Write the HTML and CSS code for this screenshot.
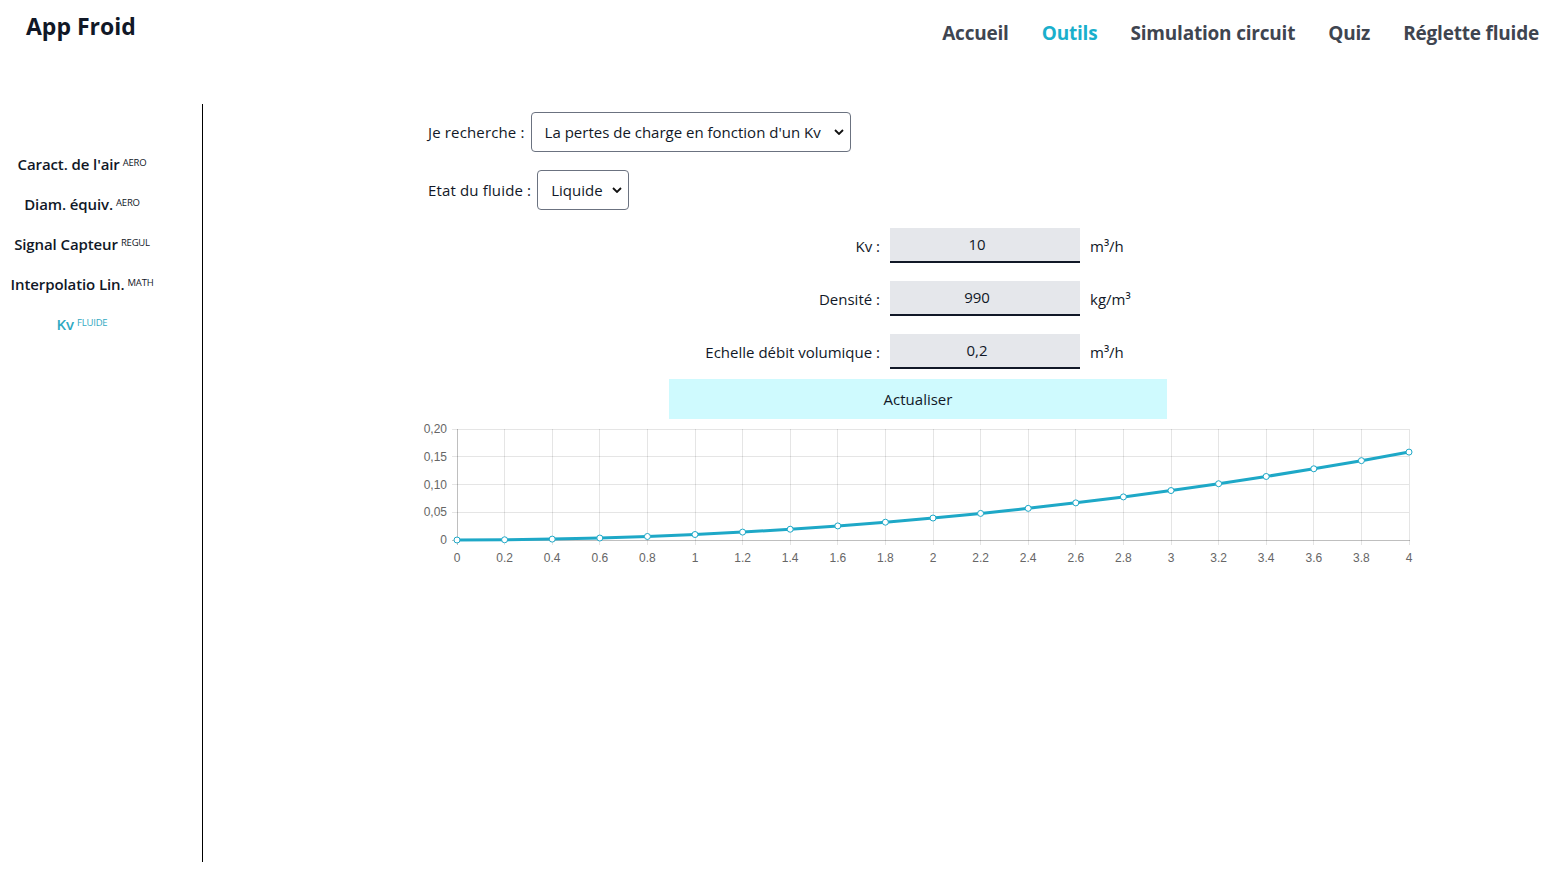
FILE: index.html
```html
<!DOCTYPE html>
<html lang="fr">
<head>
<meta charset="utf-8">
<title>App Froid</title>
<link rel="stylesheet" href="styles.css">
</head>
<body>
<header class="topbar">
  <div class="brand">App Froid</div>
  <nav class="mainnav">
    <a class="navlink" href="#">Accueil</a>
    <a class="navlink active" href="#">Outils</a>
    <a class="navlink" href="#">Simulation circuit</a>
    <a class="navlink" href="#">Quiz</a>
    <a class="navlink" href="#">Réglette fluide</a>
  </nav>
</header>
<div class="layout">
  <aside class="sidebar">
    <ul class="toollist">
      <li class="tool">Caract. de l'air<sup class="tag">AERO</sup></li>
      <li class="tool">Diam. équiv.<sup class="tag">AERO</sup></li>
      <li class="tool">Signal Capteur<sup class="tag">REGUL</sup></li>
      <li class="tool">Interpolatio Lin.<sup class="tag">MATH</sup></li>
      <li class="tool current">Kv<sup class="tag">FLUIDE</sup></li>
    </ul>
  </aside>
  <main class="content">
    <div class="selrow">
      <label class="sellabel">Je recherche :</label>
      <div class="selwrap sel-wide">
        <select class="sel"><option>La pertes de charge en fonction d'un Kv</option></select>
        <svg class="chev" viewBox="0 0 10 6" width="10" height="6"><path d="M1 1 L5 5 L9 1" fill="none" stroke="#111" stroke-width="1.8"/></svg>
      </div>
    </div>
    <div class="selrow">
      <label class="sellabel">Etat du fluide :</label>
      <div class="selwrap sel-narrow">
        <select class="sel"><option>Liquide</option></select>
        <svg class="chev" viewBox="0 0 10 6" width="10" height="6"><path d="M1 1 L5 5 L9 1" fill="none" stroke="#111" stroke-width="1.8"/></svg>
      </div>
    </div>
    <div class="fields">
      <label class="flabel">Kv :</label>
      <input class="finput" type="text" value="10">
      <span class="funit">m³/h</span>
      <label class="flabel">Densité :</label>
      <input class="finput" type="text" value="990">
      <span class="funit">kg/m³</span>
      <label class="flabel">Echelle débit volumique :</label>
      <input class="finput" type="text" value="0,2">
      <span class="funit">m³/h</span>
    </div>
    <div class="btnrow"><button class="refresh">Actualiser</button></div>
    <svg class="chart" viewBox="415 420 1005 150" width="1005" height="150">
      <g stroke="rgba(0,0,0,0.1)" stroke-width="1">
        <line x1="452" y1="429.5" x2="1409" y2="429.5"/>
        <line x1="452" y1="456.5" x2="1409" y2="456.5"/>
        <line x1="452" y1="484.5" x2="1409" y2="484.5"/>
        <line x1="452" y1="512.5" x2="1409" y2="512.5"/>
        <line x1="504.5" y1="429" x2="504.5" y2="545"/>
        <line x1="552.5" y1="429" x2="552.5" y2="545"/>
        <line x1="599.5" y1="429" x2="599.5" y2="545"/>
        <line x1="647.5" y1="429" x2="647.5" y2="545"/>
        <line x1="695.5" y1="429" x2="695.5" y2="545"/>
        <line x1="742.5" y1="429" x2="742.5" y2="545"/>
        <line x1="790.5" y1="429" x2="790.5" y2="545"/>
        <line x1="837.5" y1="429" x2="837.5" y2="545"/>
        <line x1="885.5" y1="429" x2="885.5" y2="545"/>
        <line x1="933.5" y1="429" x2="933.5" y2="545"/>
        <line x1="980.5" y1="429" x2="980.5" y2="545"/>
        <line x1="1028.5" y1="429" x2="1028.5" y2="545"/>
        <line x1="1075.5" y1="429" x2="1075.5" y2="545"/>
        <line x1="1123.5" y1="429" x2="1123.5" y2="545"/>
        <line x1="1171.5" y1="429" x2="1171.5" y2="545"/>
        <line x1="1218.5" y1="429" x2="1218.5" y2="545"/>
        <line x1="1266.5" y1="429" x2="1266.5" y2="545"/>
        <line x1="1313.5" y1="429" x2="1313.5" y2="545"/>
        <line x1="1361.5" y1="429" x2="1361.5" y2="545"/>
        <line x1="1409.5" y1="429" x2="1409.5" y2="545"/>
      </g>
      <g stroke="rgba(0,0,0,0.25)" stroke-width="1">
        <line x1="457.5" y1="429" x2="457.5" y2="545"/>
        <line x1="452" y1="540.5" x2="1410" y2="540.5"/>
      </g>
      <g class="ylab" text-anchor="end">
        <text x="447" y="433">0,20</text>
        <text x="447" y="460.5">0,15</text>
        <text x="447" y="488.5">0,10</text>
        <text x="447" y="516">0,05</text>
        <text x="447" y="544">0</text>
      </g>
      <g class="xlab" text-anchor="middle">
        <text x="457" y="561.5">0</text>
        <text x="504.6" y="561.5">0.2</text>
        <text x="552.2" y="561.5">0.4</text>
        <text x="599.8" y="561.5">0.6</text>
        <text x="647.4" y="561.5">0.8</text>
        <text x="695" y="561.5">1</text>
        <text x="742.6" y="561.5">1.2</text>
        <text x="790.2" y="561.5">1.4</text>
        <text x="837.8" y="561.5">1.6</text>
        <text x="885.4" y="561.5">1.8</text>
        <text x="933" y="561.5">2</text>
        <text x="980.6" y="561.5">2.2</text>
        <text x="1028.2" y="561.5">2.4</text>
        <text x="1075.8" y="561.5">2.6</text>
        <text x="1123.4" y="561.5">2.8</text>
        <text x="1171" y="561.5">3</text>
        <text x="1218.6" y="561.5">3.2</text>
        <text x="1266.2" y="561.5">3.4</text>
        <text x="1313.8" y="561.5">3.6</text>
        <text x="1361.4" y="561.5">3.8</text>
        <text x="1409" y="561.5">4</text>
      </g>
      <polyline class="curve" points="457,540 504.6,539.78 552.2,539.12 599.8,538.02 647.4,536.48 695,534.51 742.6,532.09 790.2,529.23 837.8,525.93 885.4,522.2 933,518.02 980.6,513.41 1028.2,508.35 1075.8,502.86 1123.4,496.92 1171,490.55 1218.6,483.74 1266.2,476.48 1313.8,468.79 1361.4,460.66 1409,452.09"/>
      <g class="dots">
        <circle cx="457" cy="540" r="3"/>
        <circle cx="504.6" cy="539.78" r="3"/>
        <circle cx="552.2" cy="539.12" r="3"/>
        <circle cx="599.8" cy="538.02" r="3"/>
        <circle cx="647.4" cy="536.48" r="3"/>
        <circle cx="695" cy="534.51" r="3"/>
        <circle cx="742.6" cy="532.09" r="3"/>
        <circle cx="790.2" cy="529.23" r="3"/>
        <circle cx="837.8" cy="525.93" r="3"/>
        <circle cx="885.4" cy="522.2" r="3"/>
        <circle cx="933" cy="518.02" r="3"/>
        <circle cx="980.6" cy="513.41" r="3"/>
        <circle cx="1028.2" cy="508.35" r="3"/>
        <circle cx="1075.8" cy="502.86" r="3"/>
        <circle cx="1123.4" cy="496.92" r="3"/>
        <circle cx="1171" cy="490.55" r="3"/>
        <circle cx="1218.6" cy="483.74" r="3"/>
        <circle cx="1266.2" cy="476.48" r="3"/>
        <circle cx="1313.8" cy="468.79" r="3"/>
        <circle cx="1361.4" cy="460.66" r="3"/>
        <circle cx="1409" cy="452.09" r="3"/>
      </g>
    </svg>
  </main>
</div>
</body>
</html>
```
FILE: styles.css
```css
* { box-sizing: border-box; }
html, body { margin: 0; padding: 0; background: #fff; }
body {
  font-family: "Open Sans", "Noto Sans", "Liberation Sans", sans-serif;
  color: #111827;
  font-size: 15px;
}
.topbar {
  height: 104px;
  display: flex;
  justify-content: space-between;
  align-items: flex-start;
  padding: 0 24px 0 26px;
}
.brand {
  font-size: 23px;
  font-weight: 700;
  line-height: 32px;
  margin-top: 10px;
  color: #111827;
}
.mainnav {
  display: flex;
  gap: 33px;
  margin-top: 19px;
}
.navlink {
  font-size: 19px;
  font-weight: 700;
  line-height: 28px;
  color: #3f4550;
  text-decoration: none;
  letter-spacing: -0.2px;
}
.navlink.active { color: #1aafcc; }
.layout { display: flex; }
.sidebar {
  width: 203px;
  height: 758px;
  padding-right: 38px;
  border-right: 1px solid #000;
}
.toollist {
  list-style: none;
  margin: 0;
  padding: 40px 0 0 0;
}
.tool {
  height: 40px;
  line-height: 40px;
  text-align: center;
  font-size: 15px;
  font-weight: 600;
  color: #111827;
  letter-spacing: -0.1px;
}
.tool.current { color: #2fa9c2; }
.tag {
  font-size: 9.5px;
  font-weight: 400;
  margin-left: 3px;
  vertical-align: 4px;
  line-height: 0;
  letter-spacing: -0.2px;
}
.content {
  margin-left: 207px;
  width: 1016px;
  padding-top: 8px;
}
.selrow {
  display: flex;
  align-items: center;
  gap: 6px;
  padding-left: 18px;
  margin-bottom: 18px;
  height: 40px;
}
.sellabel { font-size: 15px; color: #111827; letter-spacing: 0.15px; }
.selwrap { position: relative; height: 40px; }
.sel-wide { width: 320px; }
.sel-narrow { width: 92px; }
.sel {
  -webkit-appearance: none;
  appearance: none;
  width: 100%;
  height: 40px;
  border: 1px solid #6b7280;
  border-radius: 4px;
  background: #fff;
  font-family: inherit;
  font-size: 15px;
  color: #111827;
  padding: 0 20px 0 13px;
}
.chev {
  position: absolute;
  right: 7px;
  top: 17px;
  pointer-events: none;
}
.fields {
  display: grid;
  grid-template-columns: 470px 190px auto;
  column-gap: 10px;
  row-gap: 18px;
  align-items: center;
}
.flabel { text-align: right; font-size: 15px; color: #111827; }
.finput {
  width: 190px;
  height: 35px;
  border: none;
  border-bottom: 2px solid #111827;
  background: #e5e7eb;
  text-align: center;
  font-family: inherit;
  font-size: 15px;
  color: #111827;
  padding: 0 16px 2px 0;
}
.funit { font-size: 15px; color: #111827; }
.btnrow {
  display: flex;
  justify-content: center;
  margin-top: 10px;
}
.refresh {
  width: 498px;
  height: 40px;
  border: none;
  background: #cffafe;
  font-family: inherit;
  font-size: 15px;
  color: #111827;
}
.chart { display: block; margin-left: 5px; margin-top: 1px; }
.ylab, .xlab {
  font-family: "Liberation Sans", Arial, sans-serif;
  font-size: 12px;
  fill: #666;
}
.curve {
  fill: none;
  stroke: #1ea8c7;
  stroke-width: 3;
  stroke-linejoin: round;
}
.dots circle {
  fill: #fff;
  stroke: #1ea8c7;
  stroke-width: 1;
}
```
